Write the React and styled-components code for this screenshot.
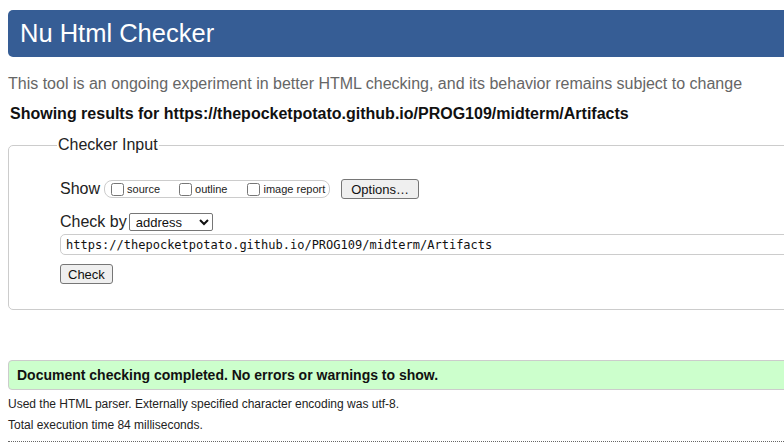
import React from "react";
import styled, { createGlobalStyle } from "styled-components";

const GlobalStyle = createGlobalStyle`
  html, body {
    margin: 0;
    padding: 0;
    background: #ffffff;
    overflow: hidden;
  }
  body {
    font-family: "Liberation Sans", Arial, sans-serif;
    color: #111;
  }
`;

const Page = styled.div`
  width: 1000px;
  padding: 10px 0 0 8px;
`;

const Header = styled.h1`
  margin: 0;
  height: 47px;
  display: flex;
  align-items: center;
  padding-left: 12px;
  background: #365d95;
  color: #ffffff;
  font-size: 25.5px;
  font-weight: normal;
  border-radius: 5px 0 0 5px;
`;

const Intro = styled.p`
  margin: 18px 0 0;
  font-size: 16px;
  line-height: 18px;
  color: #666666;
`;

const Results = styled.p`
  margin: 12px 0 0 2px;
  font-size: 16px;
  line-height: 18px;
  font-weight: bold;
  color: #111;
`;

const Fieldset = styled.fieldset`
  margin: 13px 0 0;
  padding: 0 0 25px 51px;
  border: 1px solid #cccccc;
  border-radius: 5px;
`;

const Legend = styled.legend`
  margin-left: -3px;
  padding: 0 1px;
  font-size: 16px;
  line-height: 18px;
  color: #222;
`;

const Row = styled.div`
  display: flex;
  align-items: center;
  margin-top: ${(p) => p.$top || 0}px;
`;

const Label = styled.span`
  font-size: 16px;
  line-height: 18px;
  color: #222;
  margin-right: ${(p) => p.$gap || 0}px;
`;

const Group = styled.span`
  display: inline-flex;
  align-items: center;
  height: 16px;
  padding: 0 4px 0 6px;
  border: 1px solid #cccccc;
  border-radius: 8px;
  margin-right: 11px;
`;

const Option = styled.label`
  display: inline-flex;
  align-items: center;
  font-size: 11px;
  color: #222;
  margin-right: ${(p) => p.$gap || 0}px;
`;

const Box = styled.input`
  width: 13px;
  height: 13px;
  margin: 0 3px 0 0;
`;

const Button = styled.button`
  height: 20px;
  padding: 0 ${(p) => p.$pad || 7}px;
  font-family: "Liberation Sans", Arial, sans-serif;
  font-size: 13px;
  color: #111;
  background: #efefef;
  border: 1px solid #767676;
  border-radius: 3px;
`;

const Select = styled.select`
  width: 84px;
  height: 18px;
  padding: 0 2px;
  font-family: "Liberation Sans", Arial, sans-serif;
  font-size: 13px;
  color: #111;
  background: #ffffff;
  border: 1px solid #767676;
  border-radius: 2px;
`;

const UrlInput = styled.input`
  display: block;
  box-sizing: border-box;
  width: 100%;
  height: 21px;
  margin-top: 3px;
  padding: 0 5px;
  font-family: "DejaVu Sans Mono", "Liberation Mono", monospace;
  font-size: 12px;
  color: #111;
  border: 1px solid #cccccc;
  border-radius: 5px 0 0 5px;
  outline: none;
`;

const Success = styled.div`
  margin-top: 50px;
  height: 28px;
  display: flex;
  align-items: center;
  padding-left: 8px;
  background: #ccffcc;
  border: 1px solid #cccccc;
  border-radius: 4px;
  font-size: 14px;
  font-weight: bold;
  color: #111;
`;

const Detail = styled.p`
  margin: ${(p) => p.$top || 0}px 0 0;
  font-size: 12px;
  line-height: 14px;
  color: #222;
`;

const Rule = styled.hr`
  margin: 9px 0 0;
  border: 0;
  border-top: 1px dotted #666666;
`;

export default function App() {
  const url = "https://thepocketpotato.github.io/PROG109/midterm/Artifacts";
  return (
    <>
      <GlobalStyle />
      <Page>
        <Header>Nu Html Checker</Header>
        <Intro>
          This tool is an ongoing experiment in better HTML checking, and its
          behavior remains subject to change
        </Intro>
        <Results>Showing results for {url}</Results>
        <Fieldset>
          <Legend>Checker Input</Legend>
          <Row $top={25}>
            <Label $gap={4}>Show</Label>
            <Group>
              <Option $gap={19}>
                <Box type="checkbox" />
                source
              </Option>
              <Option $gap={20}>
                <Box type="checkbox" />
                outline
              </Option>
              <Option>
                <Box type="checkbox" />
                image report
              </Option>
            </Group>
            <Button $pad={9}>Options…</Button>
          </Row>
          <Row $top={14}>
            <Label $gap={2}>Check by</Label>
            <Select defaultValue="address">
              <option value="address">address</option>
              <option value="file">file upload</option>
              <option value="text">text input</option>
            </Select>
          </Row>
          <UrlInput defaultValue={url} />
          <Row $top={9}>
            <Button>Check</Button>
          </Row>
        </Fieldset>
        <Success>Document checking completed. No errors or warnings to show.</Success>
        <Detail $top={7}>
          Used the HTML parser. Externally specified character encoding was
          utf-8.
        </Detail>
        <Detail $top={7}>Total execution time 84 milliseconds.</Detail>
        <Rule />
      </Page>
    </>
  );
}
